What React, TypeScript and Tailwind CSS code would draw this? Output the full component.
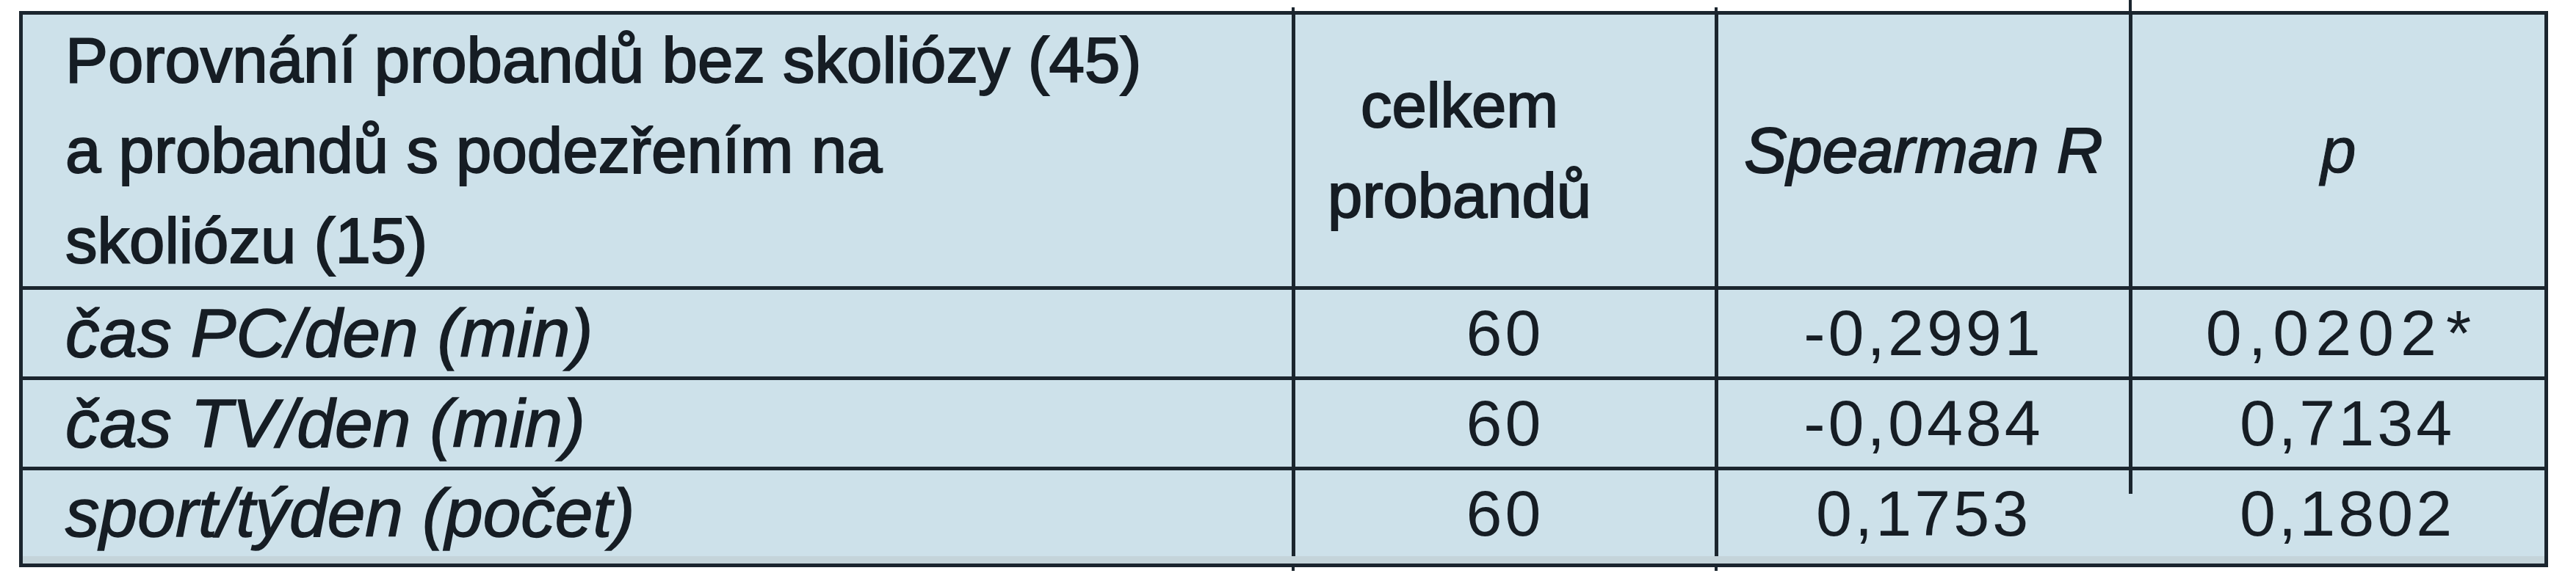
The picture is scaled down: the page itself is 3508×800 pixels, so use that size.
const rows = [
  { label: "čas PC/den (min)", n: "60", r: "-0,2991", p: "0,0202", star: true },
  { label: "čas TV/den (min)", n: "60", r: "-0,0484", p: "0,7134", star: false },
  { label: "sport/týden (počet)", n: "60", r: "0,1753", p: "0,1802", star: false },
];

const cols = "grid grid-cols-[1728px_576px_564px_566px]";

export default function App() {
  return (
    <div className="min-h-[800px] w-[3508px] bg-white pl-[26px] pt-[15px] font-['Liberation_Sans',Arial,sans-serif] text-[#161d24]">
      <div className="relative w-[3444px] border-[5px] border-[#1b252e] bg-[#cde1ea]">
        {/* scan ticks of the column rules */}
        <span className="absolute left-[1728px] top-[-10px] h-[10px] w-[4px] bg-[#1b252e]" />
        <span className="absolute left-[2304px] top-[-10px] h-[10px] w-[4px] bg-[#1b252e]" />
        <span className="absolute left-[2868px] top-[-20px] h-[20px] w-[4px] bg-[#1b252e]" />
        <span className="absolute bottom-[-10px] left-[1728px] h-[5px] w-[4px] bg-[#1b252e]" />
        <span className="absolute bottom-[-10px] left-[2304px] h-[5px] w-[4px] bg-[#1b252e]" />

        {/* header */}
        <div className={`${cols} h-[370px]`}>
          <div className="pl-[58px] text-[87px] leading-[123px] [-webkit-text-stroke:2px_#161d24]">
            Porovnání probandů bez skoliózy (45)
            <br />
            a probandů s podezřením na
            <br />
            skoliózu (15)
          </div>
          <div className="flex items-center justify-center border-l-[5px] border-[#1b252e] pr-[124px] text-center text-[85px] leading-[123px] [-webkit-text-stroke:2px_#161d24]">
            <div>
              celkem
              <br />
              probandů
            </div>
          </div>
          <div className="flex items-center justify-center border-l-[5px] border-[#1b252e] text-[87px] italic [-webkit-text-stroke:2px_#161d24]">
            Spearman R
          </div>
          <div className="flex items-center justify-center border-l-[5px] border-[#1b252e] text-[87px] italic [-webkit-text-stroke:1px_#161d24]">
            p
          </div>
        </div>

        {rows.map((row, i) => {
          const last = i === rows.length - 1;
          return (
            <div
              key={row.label}
              className={`${cols} border-t-[5px] border-[#1b252e] ${last ? "h-[122px]" : "h-[123px]"}`}
            >
              <div className="flex items-center pl-[58px] text-[93px] italic leading-none [-webkit-text-stroke:1.5px_#161d24]">
                {row.label}
              </div>
              <div className="flex items-center justify-center border-l-[5px] border-[#1b252e] text-[88px] leading-none tracking-[4px]">
                {row.n}
              </div>
              <div className="flex items-center justify-center border-l-[5px] border-[#1b252e] text-[88px] leading-none tracking-[4px]">
                {row.r}
              </div>
              {last ? (
                <div className="relative flex items-center justify-center border-l-[5px] border-l-transparent pl-[24px] text-[88px] leading-none tracking-[4px]">
                  <span className="absolute left-[-5px] top-0 h-[32px] w-[5px] bg-[#1b252e]" />
                  {row.p}
                </div>
              ) : row.star ? (
                <div className="flex items-center justify-center border-l-[5px] border-[#1b252e] text-[88px] leading-none tracking-[9px]">
                  {row.p}
                  <span className="ml-[4px] tracking-normal">*</span>
                </div>
              ) : (
                <div className="flex items-center justify-center border-l-[5px] border-[#1b252e] pl-[24px] text-[88px] leading-none tracking-[4px]">
                  {row.p}
                </div>
              )}
            </div>
          );
        })}

        {/* darker scan strip above the bottom rule */}
        <div className="h-[10px] bg-[#c4d4da]" />
      </div>
    </div>
  );
}
